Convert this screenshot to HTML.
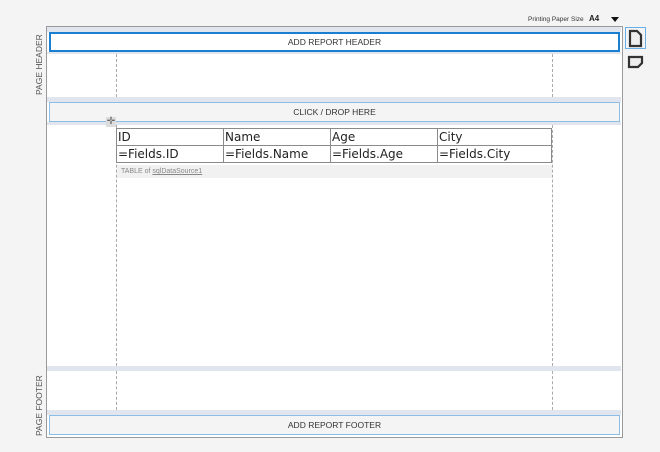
<!DOCTYPE html><html><head><style>
body{margin:0;width:660px;height:452px;background:#f4f4f4;font-family:"Liberation Sans","DejaVu Sans",sans-serif;position:relative;overflow:hidden}
.a{position:absolute}
.strip{position:absolute;left:47px;width:574px;background:#e1e6ee}
.btn{position:absolute;left:49px;width:571px;font-size:8.5px;color:#333;text-align:center;box-sizing:border-box}
.dv{position:absolute;width:0;border-left:1px dashed #aaa}
.vl{position:absolute;font-size:8.5px;color:#555;transform:rotate(-90deg);transform-origin:left top;white-space:nowrap}
td{border:1px solid #8a8a8a;font-family:"DejaVu Sans",sans-serif;font-size:12px;color:#222;padding:0 1px;height:16px;line-height:16px}
</style></head><body>
<div class="a" style="left:528px;top:16px;font-size:6.5px;color:#333">Printing Paper Size</div>
<div class="a" style="left:589px;top:14px;font-size:8px;font-weight:bold;color:#222">A4</div>
<div class="a" style="left:611px;top:17px;width:0;height:0;border-left:4px solid transparent;border-right:4px solid transparent;border-top:5px solid #111"></div>
<div class="a" style="left:46px;top:26px;width:575px;height:410px;border:1px solid #9a9a9a;background:#fff"></div>
<div class="strip" style="top:27px;height:5px"></div>
<div class="btn" style="top:32px;height:20px;line-height:17px;border:2px solid #1a7fd0;background:#fff">ADD REPORT HEADER</div>
<div class="strip" style="top:52px;height:2px"></div>
<div class="strip" style="top:97px;height:5px"></div>
<div class="btn" style="top:102px;height:20px;line-height:18px;border:1px solid #8cbde6;background:#f4f4f4">CLICK / DROP HERE</div>
<div class="strip" style="top:122px;height:3px"></div>
<div class="strip" style="top:366px;height:5px"></div>
<div class="strip" style="top:410px;height:5px"></div>
<div class="btn" style="top:415px;height:20px;line-height:18px;border:1px solid #8cbde6;background:#f4f4f4">ADD REPORT FOOTER</div>
<div class="dv" style="left:116px;top:54px;height:43px"></div>
<div class="dv" style="left:552px;top:54px;height:43px"></div>
<div class="dv" style="left:116px;top:125px;height:241px"></div>
<div class="dv" style="left:552px;top:125px;height:241px"></div>
<div class="dv" style="left:116px;top:371px;height:39px"></div>
<div class="dv" style="left:552px;top:371px;height:39px"></div>
<div class="vl" style="left:34px;top:95px">PAGE HEADER</div>
<div class="vl" style="left:34px;top:436px">PAGE FOOTER</div>
<div class="a" style="left:106px;top:117px;width:10px;height:10px;background:#ddd;color:#666;font-size:10px;line-height:10px;text-align:center">✛</div>
<table class="a" style="left:116px;top:128px;border-collapse:collapse;width:436px;table-layout:fixed">
<tr><td style="width:104px">ID</td><td style="width:104px">Name</td><td style="width:104px">Age</td><td>City</td></tr>
<tr><td>=Fields.ID</td><td>=Fields.Name</td><td>=Fields.Age</td><td>=Fields.City</td></tr>
</table>
<div class="a" style="left:117px;top:165px;width:435px;height:13px;background:#f1f1f1;font-size:7px;line-height:13px;color:#888;padding-left:4px;box-sizing:border-box">TABLE of <span style="text-decoration:underline">sqlDataSource1</span></div>
<div class="a" style="left:625px;top:27px;width:21px;height:22px;border:1px solid #6aaee8;box-sizing:border-box"></div>
<svg class="a" style="left:626px;top:28px" width="20" height="46"><path d="M4 3h7l4 4v11H4z" fill="#eee" stroke="#333" stroke-width="2.2"/><path d="M3 29h13v6l-4 4H3z" fill="#eee" stroke="#333" stroke-width="2.2"/></svg>
</body></html>
